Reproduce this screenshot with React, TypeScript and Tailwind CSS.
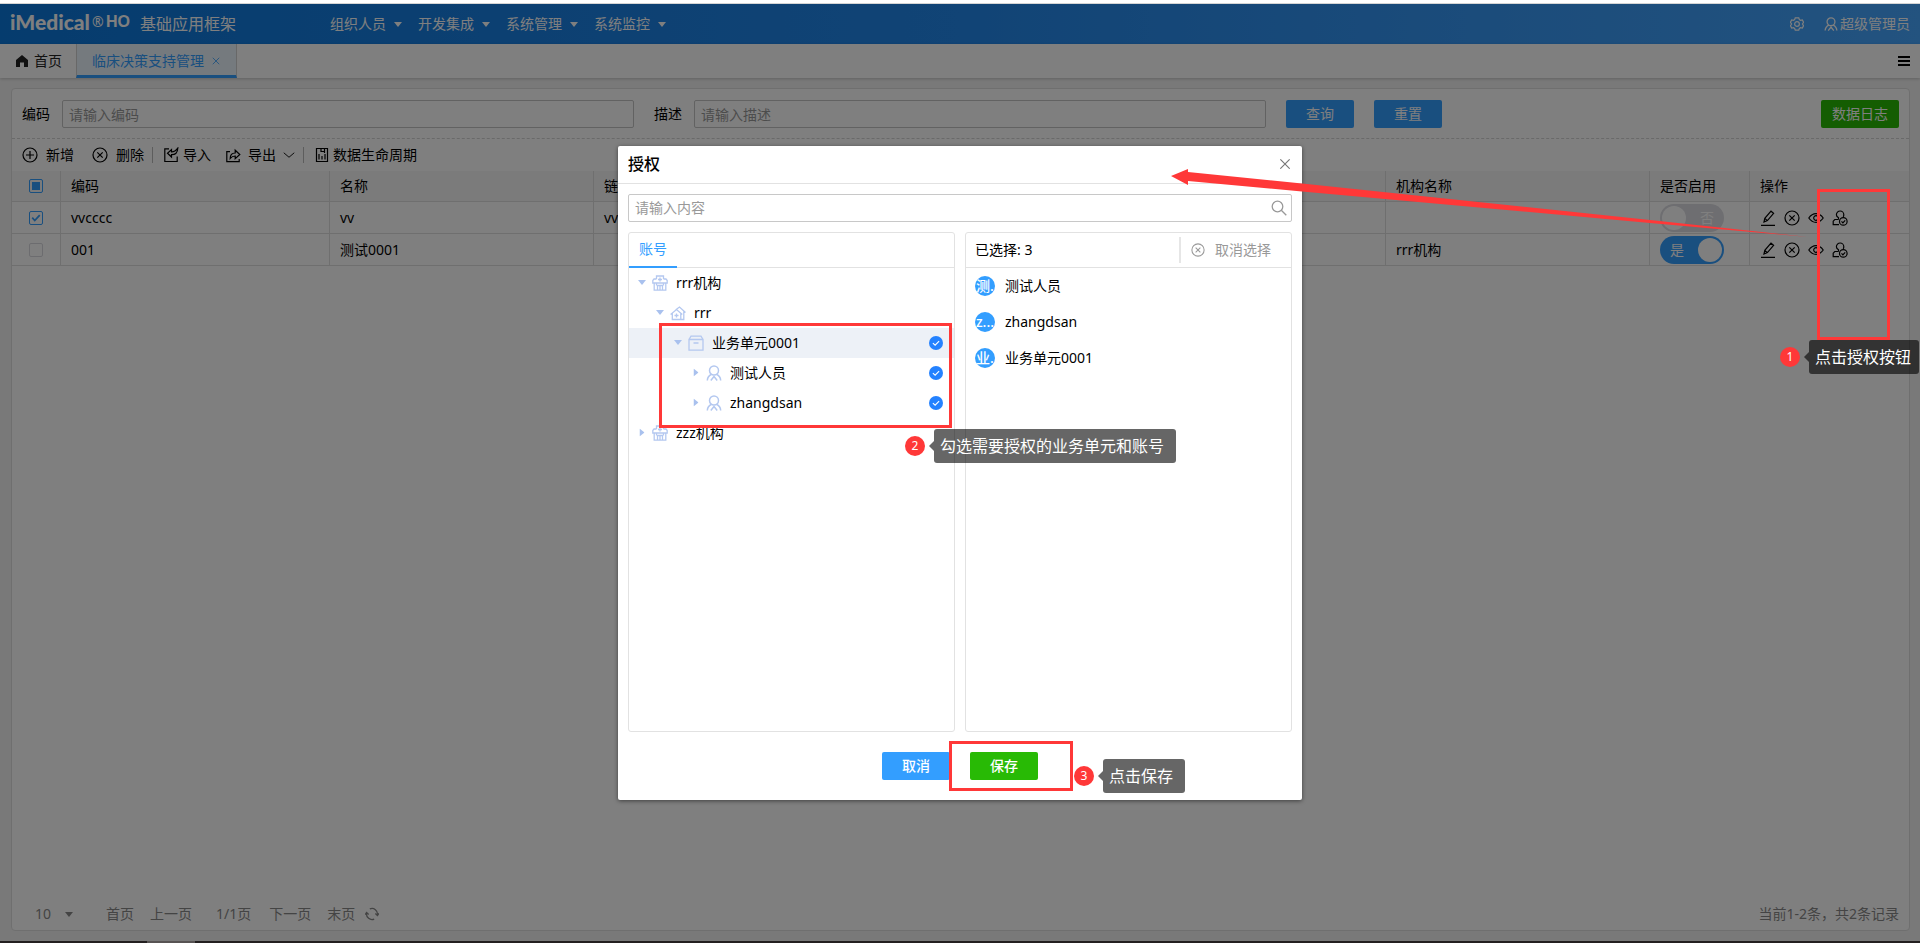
import React from "react";

type IconProps = { className?: string };

function Stroke({ className = "size-4", w = 1.2, children }: IconProps & { w?: number; children: React.ReactNode }) {
  return (
    <svg viewBox="0 0 16 16" className={`${className} shrink-0`} fill="none" stroke="currentColor" strokeWidth={w} aria-hidden="true">
      {children}
    </svg>
  );
}

const Caret = ({ className = "" }: IconProps) => (
  <svg viewBox="0 0 8 5" className={`h-[5px] w-2 shrink-0 ${className}`} fill="currentColor" aria-hidden="true">
    <path d="M0 0h8L4 5z" />
  </svg>
);

const CircleX = ({ className }: IconProps) => (
  <Stroke className={className}>
    <circle cx="8" cy="8" r="7" />
    <path d="M5.3 5.3l5.4 5.4M10.7 5.3l-5.4 5.4" />
  </Stroke>
);

const CirclePlus = () => (
  <Stroke>
    <circle cx="8" cy="8" r="7" />
    <path d="M8 4v8M4 8h8" />
  </Stroke>
);

const ImportIcon = () => (
  <Stroke>
    <path d="M6 1.8H1.8v12.7h12.4V9.5M14.8 1.2c-.2 4-2 6.500-6.300 6.500V10L4.500 6.200 8.500 2.600V5c2.500 0 4.300-1 6.300-3.800z" />
  </Stroke>
);

const ExportIcon = () => (
  <Stroke>
    <path d="M5 4.600H1.800v10h12.400V12M5.200 11.500c0-3.500 1.800-5.500 5-5.500V3.200l4.600 4.300-4.600 4.200V9c-2.200 0-3.600.6-5 2.500z" />
  </Stroke>
);

const LifecycleIcon = () => (
  <Stroke>
    <path d="M2.500 1.500h11v13h-11zM5 7v5.500M8 9v3.500M11 7v5.500M7 1.500v3h3.500M10.500 1.500V6" />
  </Stroke>
);

const PencilIcon = () => (
  <Stroke>
    <path d="M4 12l.8-3.600L11 1.200l2.600 2.200-6.200 7.200zM4.800 8.400l2.600 2.200M1 15.300h14" />
  </Stroke>
);

const EyeIcon = () => (
  <Stroke>
    <path d="M.8 8C3 4.800 5.300 3.600 8 3.600S13 4.800 15.200 8C13 11.200 10.700 12.400 8 12.400S3 11.200.8 8z" />
    <circle cx="8" cy="8" r="2.300" />
  </Stroke>
);

const UserCheckIcon = () => (
  <Stroke>
    <path d="M6.500 9.500V7.800C5.300 7 4.400 6.200 4.400 4.700a3.700 3.700 0 017.400 0c0 .9-.2 1.500-.6 2.200M6.500 9.500H2.800L1.200 11.200v3.400H7" />
    <circle cx="11.300" cy="11.400" r="3.800" />
    <path d="M9.500 11.400l1.400 1.400 2.300-2.400" />
  </Stroke>
);

const PersonIcon = ({ className }: IconProps) => (
  <Stroke className={className} w={1.5}>
    <circle cx="8" cy="5.500" r="4.500" />
    <path d="M5.500 9.300C3 10.500 1.500 12.500 1.300 15.500M10.500 9.300c2.500 1.200 4 3.200 4.200 6.200M4.800 15.500L8 11.500l3.200 4" />
  </Stroke>
);

const HospitalIcon = () => (
  <Stroke w={1.3}>
    <path d="M4.500 4V1h7v3M4.500 4H2L.8 5.500V8h14.400V5.500L14 4h-2.500M2.200 8v7.200h11.600V8M5.500 15v-4.500h5V15M8 10.500V15M6 4.500h4M8 2.500v4M4.500 8v2.500M11.500 8v2.500" />
  </Stroke>
);

const HouseIcon = () => (
  <Stroke w={1.3}>
    <path d="M.6 9.500L6.500 4.500l5.800 5M2.300 8.500v6h8.500v-6M6.500 8.500v4M4.500 10.500h4M5.800 4.800L9.500 2l6 5.500M13.800 6.500v8h-3" />
  </Stroke>
);

const UnitIcon = () => (
  <Stroke w={1.3}>
    <path d="M1 4.500v10.700h14V4.500zM1 4.500L3 1.200h10l2 3.300M5.500 8h5" />
  </Stroke>
);

const GearIcon = () => (
  <Stroke className="size-[14px]" w={1.4}>
    <path d="M6 1h4l.7 2 1.300.7 2.100-.4 1.400 2.800L14.200 8l1.300 1.900-1.400 2.800-2.100-.4-1.300.7-.7 2H6l-.7-2-1.300-.7-2.100.4L.5 9.900 1.800 8 .5 6.100l1.400-2.800 2.100.4L5.300 3z" />
    <circle cx="8" cy="8" r="2.700" />
  </Stroke>
);

const RefreshIcon = () => (
  <Stroke className="size-[14px]" w={1.5}>
    <path d="M5.500 2.200A6.300 6.300 0 0114.200 9M10.500 13.800A6.300 6.300 0 011.800 7M11.800 7.500l2.400 2.200L16 7.200M.2 8.800L1.800 6.300l2.400 2.200" />
  </Stroke>
);

const Tick = () => (
  <span className="flex size-[14px] items-center justify-center rounded-full bg-[#2482ff] text-white">
    <Stroke className="size-[10px]" w={1.8}>
      <path d="M3 8.200l3.600 3.300L13 5" />
    </Stroke>
  </span>
);

function Check({ state, label }: { state: "on" | "off" | "some"; label: string }) {
  return (
    <label className="relative block size-[14px]">
      <input
        type="checkbox"
        aria-label={label}
        defaultChecked={state === "on"}
        className={`block size-[14px] appearance-none rounded-[2px] border ${state === "off" ? "border-[#d9d9df]" : "border-[#339eff]"}`}
      />
      {state === "some" && <span className="absolute inset-[3px] bg-[#339eff]" />}
      {state === "on" && (
        <span className="absolute inset-[2px] text-[#339eff]">
          <Stroke className="block size-[10px]" w={2.8}>
            <path d="M2 7.500l4 4.500 8-8.500" />
          </Stroke>
        </span>
      )}
    </label>
  );
}

function Toggle({ on }: { on: boolean }) {
  return (
    <button
      type="button"
      role="switch"
      aria-checked={on}
      className={`flex h-7 w-16 items-center justify-between rounded-full p-0.5 text-white ${on ? "bg-[#339eff] pl-2.5" : "bg-[#dcdce2] pr-2.5"}`}
    >
      {on && <span>是</span>}
      <span className="size-6 rounded-full bg-white" />
      {!on && <span>否</span>}
    </button>
  );
}

const menus = ["组织人员", "开发集成", "系统管理", "系统监控"];
const rows = [
  { code: "vvcccc", name: "vv", link: "vv", org: "", on: false, picked: true },
  { code: "001", name: "测试0001", link: "", org: "rrr机构", on: true, picked: false },
];

const cell = "border-r border-b border-[#dedede] px-2.5 font-normal";

function Header() {
  return (
    <header className="flex h-10 shrink-0 items-center bg-linear-to-r from-[#0b78dc] via-[#2288ec] to-[#46a6ff] px-2.5 text-white">
      <div className="flex w-80 items-center">
        <span className="-mt-1 flex items-center">
          <span className="w-[82px] font-['Lato','Liberation_Sans',sans-serif] text-[21px] font-black">iMedical</span>
          <span className="w-3.5 text-sm leading-4">®</span>
          <span className="w-6 font-['Liberation_Sans',sans-serif] text-base font-bold">HO</span>
        </span>
        <span className="ml-2.5 text-base">基础应用框架</span>
      </div>
      <nav className="flex gap-4">
        {menus.map((m) => (
          <button key={m} type="button" className="flex items-center gap-2">
            {m}
            <Caret />
          </button>
        ))}
      </nav>
      <div className="ml-auto flex items-center">
        <button type="button" aria-label="设置" className="mr-5"><GearIcon /></button>
        <button type="button" className="flex items-center gap-0.5">
          <PersonIcon className="size-[14px]" />
          超级管理员
        </button>
      </div>
    </header>
  );
}

function TabBar() {
  return (
    <div className="flex h-[34px] shrink-0 items-stretch bg-white shadow-[0_1px_3px_rgba(0,0,0,0.2)]">
      <a href="#home" className="flex items-center gap-1.5 pr-3.5 pl-4 text-[#222]">
        <svg viewBox="0 0 12 12" className="size-3" fill="currentColor" aria-hidden="true">
          <path d="M6 0l6 5v7H8V7.500H4V12H0V5z" />
        </svg>
        首页
      </a>
      <div className="flex items-center gap-2 border-x border-b-3 border-x-[#d0d0d0] border-b-[#339eff] bg-[#ebf5fd] pr-4 pl-[15px] pt-0.5 text-[#339eff]">
        <a href="#cdss">临床决策支持管理</a>
        <button type="button" aria-label="关闭标签">
          <Stroke className="size-2" w={1.6}><path d="M1.500 1.500l13 13M14.500 1.500l-13 13" /></Stroke>
        </button>
      </div>
      <button type="button" aria-label="菜单" className="mr-2.5 ml-auto flex flex-col justify-center gap-0.5">
        <span className="h-0.5 w-3 bg-black" />
        <span className="h-0.5 w-3 bg-black" />
        <span className="h-0.5 w-3 bg-black" />
      </button>
    </div>
  );
}

function Filters() {
  const input = "h-7 min-w-0 grow rounded-[2px] border border-[#c4c4c4] px-1.5 placeholder:text-[#999]";
  const btn = "h-7 w-17 rounded-[2px] bg-[#339eff] text-white";
  return (
    <form className="flex items-center gap-5 border-b border-dashed border-[#d4d4d4] px-2.5 pt-[11px] pb-2.5">
      <label className="flex w-[612px] items-center gap-3">
        编码
        <input className={input} placeholder="请输入编码" />
      </label>
      <label className="flex w-[612px] items-center gap-3">
        描述
        <input className={input} placeholder="请输入描述" />
      </label>
      <button type="button" className={btn}>查询</button>
      <button type="button" className={btn}>重置</button>
      <button type="button" className="ml-auto h-7 w-[78px] rounded-[2px] bg-[#28ba05] text-white">数据日志</button>
    </form>
  );
}

function Toolbar() {
  return (
    <div className="flex h-8 items-center px-2.5">
      <button type="button" className="mr-[18px] flex items-center gap-2"><CirclePlus />新增</button>
      <button type="button" className="mr-2 flex items-center gap-2"><CircleX />删除</button>
      <span className="mr-2.5 h-4 w-px bg-[#bbb]" />
      <button type="button" className="mr-3.5 flex items-center gap-1"><ImportIcon />导入</button>
      <button type="button" className="mr-2 flex items-center gap-[7px]">
        <ExportIcon />导出
        <Stroke className="size-3"><path d="M1 5l7 6 7-6" /></Stroke>
      </button>
      <span className="mr-2.5 h-4 w-px bg-[#bbb]" />
      <button type="button" className="flex items-center gap-[3px]"><LifecycleIcon />数据生命周期</button>
    </div>
  );
}

function Grid() {
  return (
    <table className="w-full table-fixed border-separate border-spacing-0 text-left">
      <colgroup>
        <col className="w-[49px]" />
        <col className="w-[269px]" />
        <col className="w-66" />
        <col />
        <col className="w-66" />
        <col className="w-25" />
        <col className="w-[159px]" />
      </colgroup>
      <thead className="bg-[#f7f7f7]">
        <tr className="h-[31px]">
          <th className={cell}><div className="flex justify-center"><Check state="some" label="全选" /></div></th>
          <th className={cell}>编码</th>
          <th className={cell}>名称</th>
          <th className={cell}>链接</th>
          <th className={cell}>机构名称</th>
          <th className={cell}>是否启用</th>
          <th className="border-b border-[#dedede] px-2.5 font-normal">操作</th>
        </tr>
      </thead>
      <tbody>
        {rows.map((r) => (
          <tr key={r.code} className="h-8">
            <td className={cell}><div className="flex justify-center"><Check state={r.picked ? "on" : "off"} label={r.code} /></div></td>
            <td className={cell}>{r.code}</td>
            <td className={cell}>{r.name}</td>
            <td className={cell}>{r.link}</td>
            <td className={cell}>{r.org}</td>
            <td className={cell}><Toggle on={r.on} /></td>
            <td className="border-b border-[#dedede] px-2.5">
              <div className="flex gap-2">
                <button type="button" aria-label="编辑"><PencilIcon /></button>
                <button type="button" aria-label="删除"><CircleX /></button>
                <button type="button" aria-label="查看"><EyeIcon /></button>
                <button type="button" aria-label="授权"><UserCheckIcon /></button>
              </div>
            </td>
          </tr>
        ))}
      </tbody>
    </table>
  );
}

function Pager() {
  return (
    <div className="mt-auto flex h-8 items-center pr-2.5 pl-[23px] text-[#888]">
      <label className="mr-[33px] flex items-center">
        <select aria-label="每页条数" className="w-[30px] appearance-none">
          <option>10</option>
        </select>
        <Caret />
      </label>
      <button type="button" className="mr-4">首页</button>
      <button type="button" className="mr-6">上一页</button>
      <span className="mr-[18px]">1/1页</span>
      <button type="button" className="mr-4">下一页</button>
      <button type="button" className="mr-2.5">末页</button>
      <button type="button" aria-label="刷新"><RefreshIcon /></button>
      <span className="ml-auto">当前1-2条，共2条记录</span>
    </div>
  );
}

type Node = { text: string; icon: () => React.ReactElement; indent: string; open: boolean; picked?: boolean; active?: boolean };

const tree: Node[] = [
  { text: "rrr机构", icon: HospitalIcon, indent: "pl-[9px]", open: true },
  { text: "rrr", icon: HouseIcon, indent: "pl-[27px]", open: true },
  { text: "业务单元0001", icon: UnitIcon, indent: "pl-[45px]", open: true, picked: true, active: true },
  { text: "测试人员", icon: PersonIcon, indent: "pl-[63px]", open: false, picked: true },
  { text: "zhangdsan", icon: PersonIcon, indent: "pl-[63px]", open: false, picked: true },
  { text: "zzz机构", icon: HospitalIcon, indent: "pl-[9px]", open: false },
];

const chosen = [
  { badge: "测.", name: "测试人员" },
  { badge: "z...", name: "zhangdsan" },
  { badge: "业.", name: "业务单元0001" },
];

function Note({ n, text, className, wide = false }: { n: number; text: string; className: string; wide?: boolean }) {
  return (
    <div className={`absolute flex items-center ${className}`}>
      <span className="flex size-5 items-center justify-center rounded-full bg-[#ff3838] text-xs text-white">{n}</span>
      <svg viewBox="0 0 5 10" className="ml-1 h-2.5 w-[5px]" aria-hidden="true">
        <path d="M5 0v10L0 5z" className="fill-black/60" />
      </svg>
      <span className={`rounded-[3px] bg-black/60 pl-1.5 text-base leading-[34px] whitespace-nowrap text-white ${wide ? "pr-3" : "pr-2"}`}>{text}</span>
    </div>
  );
}

function Dialog() {
  return (
    <section role="dialog" aria-label="授权" className="relative flex h-[654px] w-[684px] flex-col rounded-[2px] bg-white shadow-[0_1px_4px_rgba(0,0,0,0.5)]">
      <header className="flex h-[38px] shrink-0 items-center justify-between border-b border-[#e2e2e2] pr-3 pl-2.5">
        <h2 className="text-base font-medium">授权</h2>
        <button type="button" aria-label="关闭" className="text-[#777]">
          <Stroke className="size-[10px]" w={1.8}><path d="M.5.5l15 15M15.500.5l-15 15" /></Stroke>
        </button>
      </header>
      <div className="flex grow flex-col gap-2.5 p-2.5">
        <label className="flex h-7 items-center rounded-[2px] border border-[#c8c8c8] pr-1 pl-1.5">
          <input aria-label="搜索" placeholder="请输入内容" className="min-w-0 grow outline-none placeholder:text-[#999]" />
          <Stroke className="size-4 text-[#999]" w={1.3}>
            <circle cx="6.500" cy="6.500" r="5.300" />
            <path d="M10.300 10.300l5 5" />
          </Stroke>
        </label>
        <div className="grid h-[500px] grid-cols-2 gap-2.5">
          <div className="rounded-[3px] border border-[#e2e2e2]">
            <div className="flex h-[35px] border-b border-[#e2e2e2]">
              <button type="button" className="-mb-px border-b-2 border-[#339eff] px-2.5 text-[#339eff]">账号</button>
            </div>
            <ul>
              {tree.map((t) => (
                <li key={t.text} className={`flex h-[30px] items-center pr-[11px] ${t.indent} ${t.active ? "bg-[#edf1f7]" : ""}`}>
                  <span className="mr-1.5 flex w-2 justify-center text-[#a9c1ee]">
                    <Caret className={t.open ? "" : "-rotate-90"} />
                  </span>
                  <span className="mr-2 text-[#b4c8f0]"><t.icon /></span>
                  <span>{t.text}</span>
                  {t.picked && <span className="ml-auto"><Tick /></span>}
                </li>
              ))}
            </ul>
          </div>
          <div className="rounded-[3px] border border-[#e2e2e2]">
            <div className="flex h-[35px] items-center border-b border-[#e2e2e2] pr-5 pl-[9px]">
              <span>已选择: 3</span>
              <span className="mr-2.5 ml-auto h-[26px] w-0.5 bg-[#e6e6e6]" />
              <button type="button" className="flex items-center gap-2.5 text-[#999]">
                <CircleX className="size-[14px]" />
                取消选择
              </button>
            </div>
            <ul>
              {chosen.map((c) => (
                <li key={c.name} className="flex h-9 items-center gap-2.5 px-[9px]">
                  <span className="flex size-5 items-center justify-center rounded-full bg-[#339eff] font-medium text-white">{c.badge}</span>
                  <span>{c.name}</span>
                </li>
              ))}
            </ul>
          </div>
        </div>
        <div className="mt-2.5 flex justify-center gap-5">
          <button type="button" className="h-7 w-17 rounded-[2px] bg-[#339eff] font-medium text-white">取消</button>
          <button type="button" className="h-7 w-17 rounded-[2px] bg-[#28ba05] font-medium text-white">保存</button>
        </div>
      </div>
      <div className="absolute top-[177px] left-[41px] h-[105px] w-[293px] border-3 border-[#ff3838]" />
      <Note wide n={2} text="勾选需要授权的业务单元和账号" className="top-[283px] left-[287px]" />
      <div className="absolute top-[595px] left-[331px] h-[50px] w-[124px] border-3 border-[#ff3838]" />
      <Note wide n={3} text="点击保存" className="top-[613px] left-[456px]" />
    </section>
  );
}

export default function App() {
  return (
    <div className="relative flex min-h-screen flex-col overflow-hidden bg-[#f3f3f3] font-['Noto_Sans','Noto_Sans_CJK_SC',sans-serif] text-sm leading-5 text-black">
      <div className="h-1 shrink-0 border-b border-[#d5d5d5] bg-white" />
      <Header />
      <TabBar />
      <main className="my-2.5 mr-2.5 ml-[11px] flex grow flex-col rounded-[4px] border border-[#dedede] bg-white">
        <Filters />
        <Toolbar />
        <Grid />
        <Pager />
      </main>
      <div className="h-0.5 shrink-0" />
      <div className="absolute inset-x-0 top-1 bottom-0.5 flex items-center justify-center bg-black/50">
        <Dialog />
      </div>
      <div className="absolute inset-x-0 bottom-0 h-0.5 bg-[#231f20]">
        <div className="ml-[147px] h-0.5 w-12 bg-[#575353]" />
      </div>
      <svg viewBox="0 0 640 72" className="absolute top-[167px] right-[110px] h-[72px] w-[640px]" fill="#ff3838" aria-hidden="true">
        <path d="M1 9L18 2V5L132 16.500L480 53L638 70L480 56L132 24.500L18 14V18z" />
      </svg>
      <div className="absolute top-[189px] right-[30px] h-[151px] w-[73px] border-3 border-[#ff3838]" />
      <Note n={1} text="点击授权按钮" className="top-[340px] right-px" />
    </div>
  );
}
